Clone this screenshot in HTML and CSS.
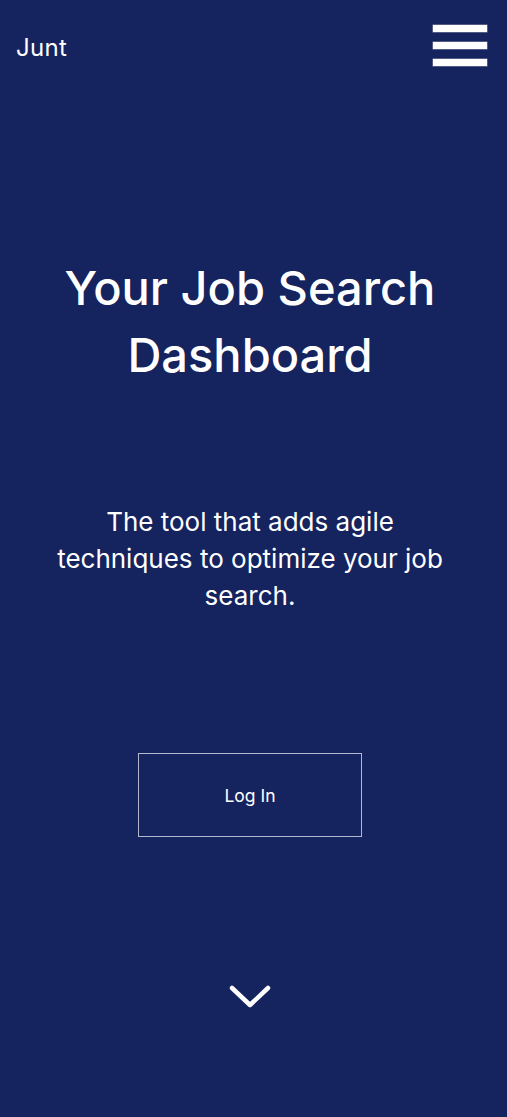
FILE: index.html
```html
<!DOCTYPE html>
<html lang="en">
<head>
<meta charset="utf-8">
<title>Junt</title>
<link rel="stylesheet" href="styles.css">
</head>
<body>
<div class="page">
  <header class="topbar">
    <div class="brand">Junt</div>
    <button class="menu" aria-label="Menu">
      <span class="bar"></span>
      <span class="bar"></span>
      <span class="bar"></span>
    </button>
  </header>
  <main class="hero">
    <h1 class="title">Your Job Search Dashboard</h1>
    <p class="lead">The tool that adds agile techniques to optimize your job search.</p>
    <a class="login" href="#">Log In</a>
    <div class="scroll">
      <svg width="42" height="26" viewBox="0 0 42 26" aria-hidden="true">
        <path d="M3 4 L21 21 L39 4" fill="none" stroke="#fff" stroke-width="4.5" stroke-linecap="round" stroke-linejoin="round"/>
      </svg>
    </div>
  </main>
</div>
</body>
</html>
```
FILE: styles.css
```css
html, body {
  margin: 0;
  padding: 0;
}
body {
  background: #15235e;
  color: #fff;
  font-family: Inter, "Noto Sans", sans-serif;
  width: 507px;
  height: 1117px;
  overflow: hidden;
}
.page {
  display: flex;
  flex-direction: column;
}
.topbar {
  display: flex;
  justify-content: space-between;
  align-items: flex-start;
  padding: 25px 20px 0 16px;
}
.brand {
  font-size: 24px;
  line-height: 28px;
  margin-top: 9px;
  font-weight: 400;
  letter-spacing: 0.3px;
}
.menu {
  background: none;
  border: 0;
  padding: 0;
  width: 54px;
  display: flex;
  flex-direction: column;
  gap: 10px;
  cursor: pointer;
}
.bar {
  display: block;
  width: 54px;
  height: 7px;
  background: #fff;
  box-shadow: 0 0 0 0.5px #8e94ad;
}
.hero {
  display: flex;
  flex-direction: column;
  align-items: center;
  text-align: center;
  padding-right: 7px;
}
.title {
  margin: 188px 0 0;
  font-size: 47px;
  line-height: 67px;
  font-weight: 500;
  width: 420px;
}
.lead {
  margin: 115px 0 0;
  font-size: 26px;
  line-height: 37px;
  width: 395px;
}
.login {
  margin-top: 139px;
  width: 222px;
  height: 82px;
  border: 1px solid #b4b8cc;
  display: flex;
  align-items: center;
  justify-content: center;
  color: #fff;
  text-decoration: none;
  font-size: 17.5px;
}
.scroll {
  margin-top: 147px;
  display: flex;
  justify-content: center;
}
```
